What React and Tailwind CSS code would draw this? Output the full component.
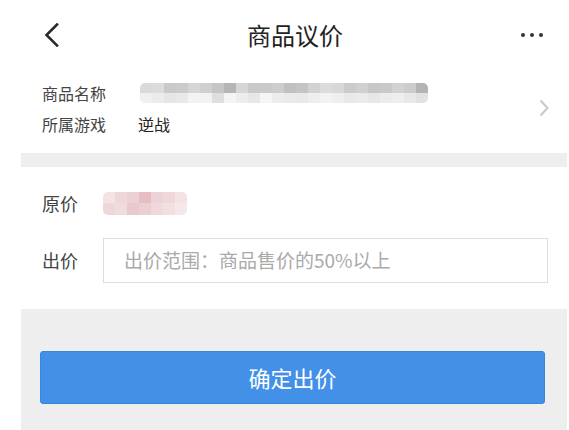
const nameTop = ["#dadada","#dcdcdc","#c9c9c9","#cbcbcb","#d6d6d6","#cfcfcf","#c5c5c5","#b5b5b5","#d6d6d6","#c9c9c9","#c9c9c9","#cdcdcd","#c0c0c0","#c4c4c4","#d2d2d2","#dbdbdb","#d8d8d8","#cbcbcb","#d0d0d0","#c7c7c7","#c9c9c9","#d2d2d2","#cccccc","#b3b3b3"];
const nameBot = ["#efefef","#ececec","#e6e6e6","#e9e9e9","#f3f3f3","#f2f2f2","#dedede","#f4f4f4","#ededed","#e7e7e7","#f5f5f5","#ededed","#eaeaea","#e9e9e9","#eeeeee","#f3f3f3","#efefef","#e9e9e9","#ebebeb","#e7e7e7","#ececec","#eeeeee","#e8e8e8","#e2e2e2"];
const pinkTop = ["#f4e3e5","#efd6d9","#ecd0d3","#e6bdc1","#edd3d6","#efd7da","#f4e3e5"];
const pinkBot = ["#eed6d9","#f0dcde","#e9c9cd","#ebd0d3","#efd9dc","#f1dfe1","#f5e8e9"];

function Pixels({ top, bot, w, h }) {
  return (
    <div className="flex flex-col overflow-hidden rounded-[5px]" style={{ width: w, height: h }}>
      <div className="flex flex-1">
        {top.map((c, i) => <div key={i} className="flex-1" style={{ background: c }} />)}
      </div>
      <div className="flex flex-1">
        {bot.map((c, i) => <div key={i} className="flex-1" style={{ background: c }} />)}
      </div>
    </div>
  );
}

export default function App() {
  return (
    <div className="w-[569px] h-[430px] overflow-hidden bg-white text-[#333] font-['Noto_Sans_CJK_SC','Noto_Sans',sans-serif]">
      {/* header */}
      <div className="flex items-center h-[70px]">
        <div className="w-[120px] pl-[44px] flex items-center">
          <svg width="15" height="24" viewBox="0 0 15 24" fill="none">
            <path d="M13 1.5 L2.5 12 L13 22.5" stroke="#2b2b2b" strokeWidth="2.6" strokeLinecap="square" strokeLinejoin="miter" />
          </svg>
        </div>
        <div className="flex-1 pl-[21px] text-center text-[24px] leading-[30px] text-[#222]">商品议价</div>
        <div className="w-[120px] pr-[26px] flex justify-end items-center gap-[5px]">
          <div className="w-[4px] h-[4px] rounded-full bg-[#333]" />
          <div className="w-[4px] h-[4px] rounded-full bg-[#333]" />
          <div className="w-[4px] h-[4px] rounded-full bg-[#333]" />
        </div>
      </div>

      {/* product info */}
      <div className="flex items-center pt-[7px] pb-[14px] pr-[20px]">
        <div className="flex-1 flex flex-col pl-[42px]">
          <div className="flex items-center h-[31px]">
            <div className="w-[98px] text-[16px] text-[#444]">商品名称</div>
            <Pixels top={nameTop} bot={nameBot} w={288} h={20} />
          </div>
          <div className="flex items-center h-[31px]">
            <div className="w-[96px] text-[16px] text-[#444]">所属游戏</div>
            <div className="text-[16px] text-[#222]">逆战</div>
          </div>
        </div>
        <svg width="10" height="18" viewBox="0 0 10 18" fill="none">
          <path d="M1.5 1.5 L8.5 9 L1.5 16.5" stroke="#c8c8c8" strokeWidth="2" />
        </svg>
      </div>

      <div className="h-[14px] ml-[21px] mr-[2px] bg-[#eeeeee]" />

      {/* price */}
      <div className="pt-[16px] pb-[26px] pl-[42px] pr-[21px] flex flex-col gap-[15px]">
        <div className="flex items-center h-[40px]">
          <div className="w-[61px] text-[18px] text-[#444]">原价</div>
          <Pixels top={pinkTop} bot={pinkBot} w={84} h={23} />
        </div>
        <div className="flex items-center h-[45px]">
          <div className="w-[61px] text-[18px] text-[#444]">出价</div>
          <div className="flex-1 h-[45px] border border-[#dddddd] flex items-center pl-[20px]">
            <span className="text-[19px] text-[#aaaaaa]">出价范围：商品售价的50%以上</span>
          </div>
        </div>
      </div>

      {/* bottom */}
      <div className="ml-[21px] mr-[2px] h-[121px] bg-[#eeeeee] pt-[42px] pl-[19px] pr-[22px]">
        <div className="h-[53px] rounded-[3px] bg-[#4290e7] border border-[#3a84da] flex items-center justify-center text-white text-[22px]">
          确定出价
        </div>
      </div>
    </div>
  );
}
